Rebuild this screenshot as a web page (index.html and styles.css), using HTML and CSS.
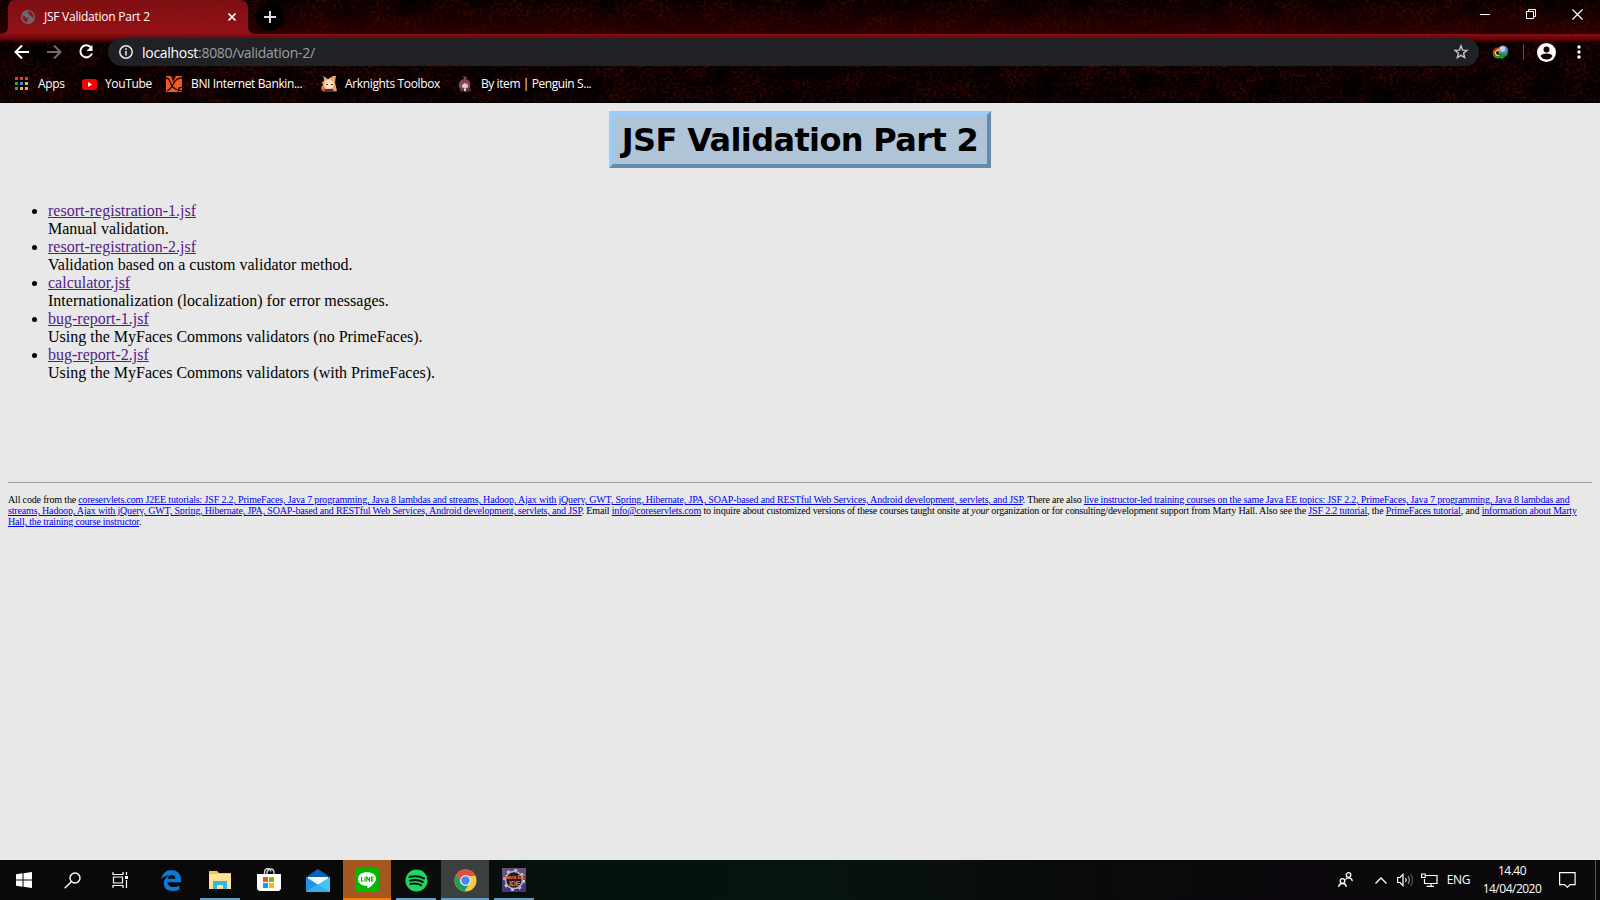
FILE: index.html
```html
<!DOCTYPE html>
<html lang="en">
<head>
<meta charset="utf-8">
<title>JSF Validation Part 2</title>
<link rel="stylesheet" href="styles.css">
</head>
<body>
<header class="chrome">
  <svg class="texture" width="1600" height="103">
    <defs>
      <filter id="grain" x="0" y="0" width="100%" height="100%" color-interpolation-filters="sRGB">
        <feTurbulence type="fractalNoise" baseFrequency="0.3 0.35" numOctaves="3" seed="4"/>
        <feColorMatrix values="0.45 0 0 0 -0.13  0.08 0 0 0 -0.035  0.08 0 0 0 -0.035  0 0 0 0 1"/>
      </filter>
      <filter id="cloud" x="0" y="0" width="100%" height="100%" color-interpolation-filters="sRGB">
        <feTurbulence type="fractalNoise" baseFrequency="0.03 0.05" numOctaves="4" seed="9"/>
        <feColorMatrix values="0 0 0 0 0  0 0 0 0 0  0 0 0 0 0  2.4 0 0 0 -0.75"/>
      </filter>
      <linearGradient id="glow" x1="0" y1="0" x2="0" y2="1">
        <stop offset="0" stop-color="#400000" stop-opacity="0"/><stop offset="1" stop-color="#480000" stop-opacity=".55"/>
      </linearGradient>
      <linearGradient id="band" x1="0" y1="0" x2="0" y2="1">
        <stop offset="0" stop-color="#970d12" stop-opacity=".9"/><stop offset=".5" stop-color="#7c080c" stop-opacity=".8"/><stop offset="1" stop-color="#400000" stop-opacity="0"/>
      </linearGradient>
      <linearGradient id="tabred" x1="0" y1="0" x2="0" y2="1">
        <stop offset="0" stop-color="#8c1013" stop-opacity=".88"/><stop offset="1" stop-color="#a3141a" stop-opacity=".88"/>
      </linearGradient>
    </defs>
    <rect width="1600" height="103" fill="#080000"/>
    <rect width="1600" height="103" filter="url(#grain)"/>
    <rect width="1600" height="103" filter="url(#cloud)" opacity=".8"/>
    <rect width="1600" height="34" fill="url(#glow)"/>
    <rect y="34" width="1600" height="10" fill="url(#band)"/>
    <path d="M0 34q8 0 8-8V8q0-8 8-8h224q8 0 8 8v18q0 8 8 8z" fill="url(#tabred)"/>
    <rect y="102" width="1600" height="1" fill="#000"/>
  </svg>
  <div class="tabs">
    <div class="tab">
      <svg width="14" height="14" viewBox="0 0 14 14"><circle cx="7" cy="7" r="7" fill="#686b6f"/><path d="M2 5.500q2 0 2.500 1.500t2.500.5q1 1.500-.5 2.500l-.5 2.500Q2 11.500 1.500 7zM7 1.500q-1 2 1 2.500t.5 2q2-.5 2.500 1t1.500.5Q12.500 2 8 1z" fill="#8f171a"/></svg>
      <span class="tab-title">JSF Validation Part 2</span>
      <svg class="close" width="10" height="10" viewBox="0 0 10 10" stroke="#fff" stroke-width="1.700"><path d="M1.500 1.500l7 7m0-7l-7 7"/></svg>
    </div>
    <div class="newtab"><svg width="12" height="12" stroke="#ddd" stroke-width="2"><path d="M6 0v12M0 6h12"/></svg></div>
    <div class="wincontrols">
      <svg width="10" height="10" stroke="#fff"><path d="M0 5.500h10"/></svg>
      <svg width="10" height="10" stroke="#fff" fill="none"><path d="M.5 2.500h7v7h-7zM2.500 2.500v-2h7v7h-2"/></svg>
      <svg width="11" height="11" stroke="#fff" stroke-width="1.200"><path d="M.5.5l10 10m0-10l-10 10"/></svg>
    </div>
  </div>
  <div class="toolbar">
    <svg class="nav" width="16" height="16" viewBox="0 0 16 16" fill="none" stroke="#fff" stroke-width="2"><path d="M15 8H2M8 1.500L1.500 8 8 14.500"/></svg>
    <svg class="nav" width="16" height="16" viewBox="0 0 16 16" fill="none" stroke="#76696a" stroke-width="2"><path d="M1 8h13M8 1.500L14.500 8 8 14.500"/></svg>
    <svg class="nav" width="16" height="16" viewBox="0 0 16 16" fill="none" stroke="#fff" stroke-width="2"><path d="M13 3.500A6 6 0 1 0 14 9.500"/><path d="M14.500 1v6h-6z" fill="#fff" stroke="none"/></svg>
    <div class="omnibox">
      <svg width="14" height="14" fill="none" stroke="#e8eaed" stroke-width="1.500"><circle cx="7" cy="7" r="6.200"/><path d="M7 6v4.500M7 3.300v1.600"/></svg>
      <span class="url">localhost<span class="dim">:8080/validation-2/</span></span>
      <svg class="star" width="16" height="16" viewBox="0 0 16 16" fill="none" stroke="#c5c7ca" stroke-width="1.400"><path d="M8 1.800l1.600 4.300 4.400.3-3.400 2.900 1.100 4.300L8 11.300l-3.700 2.300 1.100-4.300L2 6.400l4.400-.3z"/></svg>
    </div>
    <svg class="idm" width="17" height="15" viewBox="0 0 17 15"><circle cx="11" cy="5.500" r="5" fill="#5b88d8"/><circle cx="10.500" cy="4" r="2.800" fill="#b9d6dc"/><path d="M7 3Q1 4 1.500 8.500T7 12" fill="none" stroke="#e5372b" stroke-width="1.500"/><path d="M7 4.500Q2.500 6 3.300 8.500T8 10.500" fill="none" stroke="#f4dc2e" stroke-width="1.600"/><path d="M1 10q2 4.500 8 3l.5 1.500L16.500 9l-8-1.500L9 10Q4 12 1 10z" fill="#1d9c1c"/></svg>
    <i class="divider"></i>
    <svg class="avatar" width="19" height="19" viewBox="0 0 19 19"><circle cx="9.500" cy="9.500" r="9.500" fill="#fff"/><circle cx="9.500" cy="6.500" r="3" fill="#180203"/><path d="M3.500 13q1-2.500 6-2.500t6 2.500q-2 3.500-6 3.500T3.500 13z" fill="#180203"/></svg>
    <svg class="dots" width="4" height="14" fill="#fff"><circle cx="2" cy="2" r="1.700"/><circle cx="2" cy="7" r="1.700"/><circle cx="2" cy="12" r="1.700"/></svg>
  </div>
  <nav class="bookmarks">
    <a class="bm b1"><svg width="13" height="14"><g fill="#ea3d34"><path d="M0 0h3v3H0zM5 0h3v3H5zM10 0h3v3h-3z"/></g><path d="M0 5h3v3H0zM0 10h3v3H0z" fill="#31a354"/><path d="M5 5h3v3H5z" fill="#4285f4"/><path d="M10 5h3v3h-3zM10 10h3v3h-3zM5 10h3v3H5z" fill="#f9b80b"/></svg><span>Apps</span></a>
    <a class="bm b2"><svg width="15" height="11"><rect width="15" height="11" rx="3" fill="red"/><path d="M6 3l4 2.500L6 8z" fill="#fff"/></svg><span>YouTube</span></a>
    <a class="bm b3"><svg width="16" height="16"><path fill="#f15a23" d="M0 0h16v16H0z"/><path d="M0 2q3 0 4.500 5T11 13.500t5 1M16 2q-6 0-8.500 5.500T1 15M12 16l1-4 3-1" fill="none" stroke="#250806" stroke-width="1.300"/><path d="M5 0h5L7 6z" fill="#250806"/></svg><span>BNI Internet Bankin...</span></a>
    <a class="bm b4"><svg width="16" height="16" viewBox="0 0 16 16"><path d="M3 3L2 0l5 3 5-3h3l-1 6 1 5 1 4-6 1-8-1-2-3 2-3-1-3 2-1z" fill="#dfa67c"/><path d="M4 5l5-2 4 4-1 5-6 1-3-3z" fill="#f8dfba"/><path d="M5 8h2v1H5zM10 8h2v1h-2zM4 13h8l1 3H2z" fill="#5c302d"/><path d="M0 12l3-1 1 3-3 1z" fill="#df5638"/></svg><span>Arknights Toolbox</span></a>
    <a class="bm b5"><svg width="14" height="16" viewBox="0 0 14 16"><path d="M5 0l4 1-1 2q5 1 4 8l-2 4H3L1 11Q0 4 6 3z" fill="#854653"/><path d="M4 9l3-2 3 2v2l-3 2-3-2z" fill="#efc5b5"/><path d="M2 12l5 1 5-1 1 3-5 1-6-1z" fill="#403e55"/><path d="M6 13h2v2H6z" fill="#ddd"/></svg><span>By item | Penguin S...</span></a>
  </nav>
</header>

<main class="page">
  <h1 class="title"><span>JSF Validation Part 2</span></h1>
  <ul class="list">
    <li><a>resort-registration-1.jsf</a><br>Manual validation.</li>
    <li><a>resort-registration-2.jsf</a><br>Validation based on a custom validator method.</li>
    <li><a>calculator.jsf</a><br>Internationalization (localization) for error messages.</li>
    <li><a>bug-report-1.jsf</a><br>Using the MyFaces Commons validators (no PrimeFaces).</li>
    <li><a>bug-report-2.jsf</a><br>Using the MyFaces Commons validators (with PrimeFaces).</li>
  </ul>
  <hr class="rule">
  <div class="credits">
    <div>All code from the <a>coreservlets.com J2EE tutorials: JSF 2.2, PrimeFaces, Java 7 programming, Java 8 lambdas and streams, Hadoop, Ajax with jQuery, GWT, Spring, Hibernate, JPA, SOAP-based and RESTful Web Services, Android development, servlets, and JSP</a>. There are also <a>live instructor-led training courses on the same Java EE topics: JSF 2.2, PrimeFaces, Java 7 programming, Java 8 lambdas and</a></div>
    <div><a>streams, Hadoop, Ajax with jQuery, GWT, Spring, Hibernate, JPA, SOAP-based and RESTful Web Services, Android development, servlets, and JSP</a>. Email <a>info@coreservlets.com</a> to inquire about customized versions of these courses taught onsite at <em>your</em> organization or for consulting/development support from Marty Hall. Also see the <a>JSF 2.2 tutorial</a>, the <a>PrimeFaces tutorial</a>, and <a>information about Marty</a></div>
    <div><a>Hall, the training course instructor</a>.</div>
  </div>
</main>

<footer class="taskbar">
  <div class="app"><svg width="16" height="16" fill="#fff"><path d="M0 2.200L6.500 1.300V7.500H0zM7.500 1.200L16 0v7.500H7.500zM0 8.500h6.500v6.200L0 13.800zM7.500 8.500H16V16l-8.500-1.200z"/></svg></div>
  <div class="app"><svg width="17" height="17" fill="none" stroke="#fff" stroke-width="1.400"><circle cx="11" cy="6" r="5"/><path d="M7.300 9.700L.7 16.300"/></svg></div>
  <div class="app"><svg width="17" height="16" fill="none" stroke="#fff" stroke-width="1.200"><path d="M1 0v2.500h10V0M1 16v-2.500h10V16M1.500 5h9v6h-9zM14.500 0v3M14.500 8v8"/><path d="M13 4h3v3h-3z" fill="#fff" stroke="none"/></svg></div>
  <div class="app"><svg width="20" height="21" viewBox="0 0 20 21"><path d="M0 9.500Q2 0 10.500 0 20 .3 20 10v2.300H6.500q.5 4.700 6 4.700 3.500 0 6-1.600v4q-3 1.600-7 1.600-8.300 0-8.800-7.500Q2.800 8 8 5.500 3.500 5.500 0 9.500zM6.700 8.700h7.600q0-3.700-3.500-3.700T6.700 8.700z" fill="#0a7bdc"/></svg></div>
  <div class="app under"><svg width="22" height="18"><path d="M0 0h8l2 2h12v16H0z" fill="#f3c74b"/><path d="M0 3h22v15H0z" fill="#ffe394"/><path d="M4 18v-8h14v8h-4v-4H8v4z" fill="#35b5e8"/></svg></div>
  <div class="app"><svg class="store" width="24" height="24"><path d="M7.500 7V4.500q0-4 3.500-4 2.500 0 3 3M10 7V4q1-3 4-3 3 0 3 4v2" fill="none" stroke="#ddd" stroke-width="1.300"/><path d="M0 6h24v15l-2 2H2l-2-2z" fill="#fff"/><path fill="#f25022" d="M6 9h5v5H6z"/><path fill="#7fba00" d="M12 9h5v5h-5z"/><path fill="#00a4ef" d="M6 15h5v5H6z"/><path fill="#ffb900" d="M12 15h5v5h-5z"/></svg></div>
  <div class="app"><svg class="mail" width="24" height="23"><path d="M0 8L12 0l12 8v4H0z" fill="#0861b5"/><path d="M2 8h20v8H2z" fill="#f5f6f7"/><path d="M0 8l14 9-14 6z" fill="#2193e2"/><path d="M24 8L0 23h24z" fill="#42c4f4"/><path d="M12 15.500L24 23H0z" fill="#36aeea"/></svg></div>
  <div class="app orange"><svg width="24" height="24"><rect width="24" height="24" rx="4" fill="#00b900"/><path d="M12 4q9 .5 9 7 0 4-8 9.500-1 0-.5-2.500Q3 17.500 3 11t9-7z" fill="#fff"/><path d="M6.500 9v4h2M10 9v4.500M11.800 13.500V9l2.700 4V9M18.500 9h-2v4h2M16.500 11h2" fill="none" stroke="#00a900" stroke-width="1.100"/></svg></div>
  <div class="app under"><svg width="23" height="23"><circle cx="11.500" cy="11.500" r="11" fill="#1ed760"/><path d="M4.500 8q8-2 14.500 1.500M5 11.700q7-1.800 12.800 1.300M5.500 15q6-1.500 10.500 1.200" fill="none" stroke="#08150c" stroke-width="2" stroke-linecap="round"/></svg></div>
  <div class="app active"><svg width="23" height="23" viewBox="0 0 23 23"><circle cx="11.500" cy="11.500" r="11" fill="#fbc740"/><path d="M2 6a11 11 0 0 1 19.500 1H11.500L7 14z" fill="#dd5044"/><path d="M2 6a11 11 0 0 0 8.500 16.500L15.500 14l-8.500 0z" fill="#1aa15f"/><circle cx="11.500" cy="11.500" r="5.400" fill="#f2f2f2"/><circle cx="11.500" cy="11.500" r="4.200" fill="#4688f1"/></svg></div>
  <div class="app under"><svg width="24" height="24" viewBox="0 0 24 24"><rect width="24" height="24" fill="#49357c"/><path d="M0 0h24v8H0z" fill="#66507c"/><circle cx="12" cy="12" r="8.500" fill="#211b2c" stroke="#bbb" stroke-width="1.500"/><circle cx="12" cy="12" r="10" fill="none" stroke="#ccc" stroke-width="2" stroke-dasharray="3 4.850"/><text x="1.500" y="11" class="ide">Java EE</text><text x="7" y="18" class="ide ide2">IDE</text></svg></div>
  <div class="tray">
    <svg class="people" width="15" height="16" fill="none" stroke="#fff" stroke-width="1.300"><circle cx="10.500" cy="3" r="2.300"/><circle cx="4.500" cy="9" r="2.300"/><path d="M.7 15q.3-3.500 3.800-3.500T8.300 15M7.500 7.500q1-1.700 3-1.700 3.500 0 3.800 3.500"/></svg>
    <svg class="up" width="12" height="7" fill="none" stroke="#fff" stroke-width="1.300"><path d="M.5 6.500L6 1l5.500 5.500"/></svg>
    <svg class="vol" width="17" height="14" fill="none" stroke="#fff" stroke-width="1.200"><path d="M.6 4.500H3L6 1.500v11L3 9.500H.6z"/><path d="M8.500 5q1.500 2 0 4"/><path d="M11 3q2.700 4 0 8" stroke="#999"/><path d="M13.500 1q4 6 0 12" stroke="#555"/></svg>
    <svg class="net" width="17" height="14" fill="none" stroke="#fff" stroke-width="1.200"><path d="M4.500 2.500h11.500v8H3.500V6M10 10.500v3M5.500 13.300h7.500M.6 1h3.600v3.500H.6z"/></svg>
    <span class="lang">ENG</span>
    <div class="clock"><span>14.40</span><span>14/04/2020</span></div>
    <svg class="note" width="17" height="16" fill="none" stroke="#fff" stroke-width="1.200"><path d="M.6.600h15.500v12H11l-2.700 2.700-2.700-2.700h-5z"/></svg>
    <i class="peek"></i>
  </div>
</footer>
</body>
</html>
```
FILE: styles.css
```css
* { box-sizing: border-box; }
body { margin: 0; width: 1600px; height: 900px; overflow: hidden; display: flex; flex-direction: column; background: #e8e8e8; font-family: "Liberation Serif", serif; color: #000; }
svg { display: block; flex: none; }

.chrome { position: relative; height: 103px; flex: none; background: #080000; color: #fff; font: 12px "Open Sans", sans-serif; }
.texture { position: absolute; left: 0; top: 0; }
.tabs, .toolbar, .bookmarks { position: relative; display: flex; align-items: center; white-space: nowrap; }
.tabs { height: 34px; }
.tab { width: 240px; height: 34px; margin-left: 8px; padding: 0 11px 0 13px; display: flex; align-items: center; }
.tab-title { margin: -1px 0 0 9px; letter-spacing: -0.25px; }
.close { margin-left: auto; }
.newtab { width: 28px; height: 28px; margin-left: 8px; border-radius: 50%; background: #000; display: grid; place-items: center; }
.wincontrols { margin: -6px 17px 0 auto; display: flex; gap: 36px; align-items: center; }
.toolbar { height: 36px; padding-left: 14px; }
.nav { margin-right: 16px; }
.omnibox { width: 1371px; height: 28px; margin-left: -2px; border-radius: 14px; background: #202124; display: flex; align-items: center; padding: 0 10px 0 11px; }
.url { margin-left: 9px; font-size: 14px; letter-spacing: -0.29px; }
.dim { color: #9aa0a6; }
.star { margin-left: auto; }
.idm { margin-left: 13px; }
.divider { width: 1px; height: 16px; margin-left: 14px; background: #624a4c; }
.avatar { margin-left: 13px; }
.dots { margin-left: 21px; }
.bookmarks { height: 28px; }
.bm { position: relative; display: flex; align-items: center; }
.bm span { letter-spacing: -0.36px; margin-top: -2px; }
.b1 { width: 67px; margin-left: 15px; gap: 10px; }
.b2 { width: 84px; gap: 8px; }
.b3 { width: 155px; gap: 9px; }
.b4 { width: 137px; gap: 8px; }
.b5 { gap: 9px; }
.b5 span { letter-spacing: -0.42px; }

.page { height: 757px; padding: 8px 8px 0; flex: none; }
.title { width: 382px; height: 57px; margin: 0 auto; border: 4px solid; border-color: #99ccff #668aaa #668aaa #99ccff; background: #b0c4d8; display: flex; align-items: center; justify-content: center; font: bold 32px "DejaVu Sans", sans-serif; letter-spacing: -0.64px; white-space: nowrap; }
.list { margin: 34px 0 0; padding-left: 40px; font-size: 16px; line-height: 18px; white-space: nowrap; }
.list a { color: #551a8b; text-decoration: underline; }
.rule { margin: 100px 0 0; height: 2px; border: 0; border-top: 1px solid #9a9a9a; border-bottom: 1px solid #eee; }
.credits { margin-top: 10px; font-size: 10px; line-height: 11px; letter-spacing: -0.165px; white-space: nowrap; }
.credits a { color: #0000ee; text-decoration: underline; }

.taskbar { height: 40px; flex: none; display: flex; background: linear-gradient(90deg, #0a0909 0, #0a0909 340px, #06120c 560px, #07130e 840px, #0a0a0c 1100px, #0c080d 1300px, #0a090b); color: #fff; font: 12px "Open Sans", sans-serif; }
.app { position: relative; width: 48px; display: grid; place-items: center; }
.app:nth-child(4) { width: 54px; }
.app:nth-child(5) { width: 44px; }
.app:nth-child(6) { width: 54px; }
.app:nth-child(7) { width: 47px; }
.app:nth-child(9) { width: 50px; }
.app:nth-child(11) { width: 49px; }
.store { margin-top: -1px; }
.mail { margin-right: 3px; }
.under::after, .active::after, .orange::after { content: ""; position: absolute; left: 50%; margin-left: -20px; width: 40px; bottom: 0; height: 2px; background: #5f9fca; }
.orange { background: #a3581f; }
.orange::after { left: 0; margin: 0; width: 100%; background: #ff7a00; }
.active { background: #3b3f3d; }
.active::after { left: 0; margin: 0; width: 100%; }
.ide { font: bold 6px "Liberation Sans", sans-serif; fill: #ef7d1d; letter-spacing: -0.2px; }
.ide2 { font-size: 7px; }
.tray { margin-left: auto; display: flex; align-items: center; white-space: nowrap; }
.up { margin-left: 22px; }
.vol { margin-left: 10px; }
.net { margin-left: 7px; }
.lang { margin: -2px 0 0 9px; letter-spacing: -0.4px; }
.clock { width: 60px; margin: -1px 0 0 12px; display: flex; flex-direction: column; align-items: center; line-height: 18px; letter-spacing: -0.5px; }
.note { margin-left: 17px; }
.peek { width: 1px; height: 40px; margin: 0 4px 0 19px; background: #555; }
```
